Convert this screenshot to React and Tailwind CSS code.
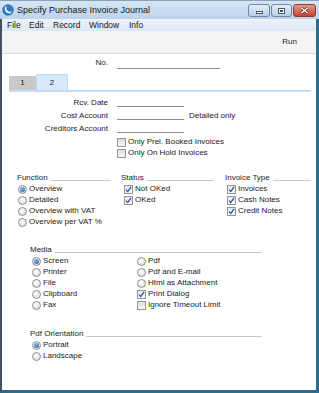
import React from "react";

function Radio({ on }) {
  return (
    <div className="w-[9px] h-[9px] rounded-full border border-[#8b8d90] bg-[radial-gradient(circle_at_40%_35%,#ffffff,#d4d6d8)] flex items-center justify-center shrink-0">
      {on && (
        <div className="w-[5px] h-[5px] rounded-full bg-[radial-gradient(circle_at_40%_35%,#7fb6ea,#1f5fae)]" />
      )}
    </div>
  );
}

function Check({ on }) {
  return (
    <div
      className={
        "w-[9px] h-[9px] border border-[#939494] shrink-0 flex items-center justify-center " +
        (on
          ? "bg-[linear-gradient(to_bottom,#e4eaf2,#f6f8fb)]"
          : "bg-[linear-gradient(to_bottom,#dcdcdc,#f7f7f7)]")
      }
    >
      {on && (
        <svg width="7" height="7" viewBox="0 0 7 7">
          <path d="M1 3.6 L2.8 5.6 L6 0.8" fill="none" stroke="#2a4a96" strokeWidth="1.2" />
        </svg>
      )}
    </div>
  );
}

function Item({ kind, on, label }) {
  return (
    <div className="h-[11px] flex items-center gap-[2px]">
      {kind === "r" ? <Radio on={on} /> : <Check on={on} />}
      <span className="whitespace-nowrap leading-none">{label}</span>
    </div>
  );
}

function Header({ label }) {
  return (
    <div className="h-[11px] flex items-center">
      <span className="whitespace-nowrap leading-none">{label}</span>
      <div className="flex-1 ml-[3px] mt-[4px] h-px bg-[#c9c9c9]" />
    </div>
  );
}

function FieldRow({ label, h, extra }) {
  return (
    <div className={"flex items-center " + h}>
      <div className="w-[106px] text-right whitespace-nowrap leading-none">{label}</div>
      <div className="ml-[9px] w-[67px] h-[8px] border-b border-[#8c8c8c]" />
      {extra && <span className="ml-[5px] whitespace-nowrap leading-none">{extra}</span>}
    </div>
  );
}

export default function App() {
  return (
    <div className="w-[319px] h-[393px] overflow-hidden flex flex-col bg-[#bdd4ec] font-['Liberation_Sans',Arial,sans-serif] text-[8px] text-[#1a1a1a]">
      {/* Title bar */}
      <div className="h-[19px] shrink-0 flex items-center pl-[2px] bg-[linear-gradient(to_bottom,#d5e5f5,#bcd3ea)] border-t border-[#8aa3bd]">
        <svg width="12" height="12" viewBox="0 0 12 12" className="shrink-0">
          <circle cx="6" cy="6" r="5.8" fill="#2f7cc4" />
          <path d="M3.2 2.6 C2.2 5 3.2 8.6 6.4 9.2 C8.4 9.5 9.6 8.4 9.9 7.2 C8.6 8.2 6.4 8 5.2 6.6 C4.2 5.4 4 3.8 4.6 2.2 Z" fill="#ffffff" />
        </svg>
        <span className="ml-[3px] text-[9px] leading-none text-[#151515]">Specify Purchase Invoice Journal</span>
        <div className="ml-auto mr-[3px] flex gap-[1px] self-start mt-[3px]">
          <div className="w-[22px] h-[13px] rounded-[3px] border border-[#6d87a3] bg-[linear-gradient(to_bottom,#e3edf7,#b7cde4)] flex items-center justify-center">
            <div className="w-[7px] h-[3px] bg-white border border-[#4a5563] mt-[4px]" />
          </div>
          <div className="w-[21px] h-[13px] rounded-[3px] border border-[#6d87a3] bg-[linear-gradient(to_bottom,#e3edf7,#b7cde4)] flex items-center justify-center">
            <div className="w-[7px] h-[6px] bg-white border border-[#4a5563] flex items-center justify-center">
              <div className="w-[3px] h-[2px] border border-[#4a5563]" />
            </div>
          </div>
          <div className="w-[23px] h-[13px] rounded-[3px] border border-[#8b3a30] bg-[linear-gradient(to_bottom,#e79a8c,#c8412f)] flex items-center justify-center">
            <svg width="9" height="7" viewBox="0 0 9 7">
              <path d="M1.5 1 L7.5 6 M7.5 1 L1.5 6" stroke="#4a1a12" strokeWidth="2.6" />
              <path d="M1.5 1 L7.5 6 M7.5 1 L1.5 6" stroke="#ffffff" strokeWidth="1.5" />
            </svg>
          </div>
        </div>
      </div>

      {/* Client */}
      <div className="flex-1 flex flex-col bg-white border-l-2 border-l-[#46505b] border-r-[3px] border-r-[#2b6e8c] border-b-[3px] border-b-[#2b6e8c]">
        {/* Menu */}
        <div className="h-[12px] shrink-0 flex items-center bg-[linear-gradient(to_bottom,#eef3fa,#dbe6f3)] text-[8.5px] leading-none text-[#151515]">
          <span className="ml-[5px] w-[22px]">File</span>
          <span className="w-[24px]">Edit</span>
          <span className="w-[36px]">Record</span>
          <span className="w-[40px]">Window</span>
          <span>Info</span>
        </div>
        {/* Toolbar */}
        <div className="h-[23px] shrink-0 flex items-center justify-end pr-[19px] bg-[#f4f4f4] border-b border-[#dadada]">
          <span className="leading-none">Run</span>
        </div>

        {/* Content */}
        <div className="flex-1 flex flex-col">
          <div className="mt-[2px] h-[14px] flex items-center">
            <div className="w-[106px] text-right leading-none">No.</div>
            <div className="ml-[9px] w-[103px] h-[12px] border-b border-[#8c8c8c]" />
          </div>

          {/* Tabs */}
          <div className="mt-[4px] ml-[7px] mr-[5px] flex flex-col">
            <div className="h-[16px] flex items-end">
              <div className="w-[27px] h-[14px] bg-[#c9c9c9] flex items-center justify-center leading-none">1</div>
              <div className="w-[32px] h-[16px] bg-[#d6e8f9] border-t border-x border-[#bcd7f0] flex items-center justify-center leading-none">2</div>
            </div>
            <div className="h-[1.5px] bg-[#c4ddf4]" />
          </div>

          <div className="mt-[4px]">
            <FieldRow label="Rcv. Date" h="h-[14px]" />
            <FieldRow label="Cost Account" h="h-[13px]" extra="Detailed only" />
            <FieldRow label="Creditors Account" h="h-[13px]" />
          </div>

          <div className="ml-[115px] mt-[1px]">
            <Item kind="c" label="Only Prel. Booked Invoices" />
            <Item kind="c" label="Only On Hold Invoices" />
          </div>

          {/* Function / Status / Invoice Type */}
          <div className="mt-[14px] flex">
            <div className="ml-[15px] w-[94px]">
              <Header label="Function" />
              <div className="ml-[1px]">
                <Item kind="r" on label="Overview" />
                <Item kind="r" label="Detailed" />
                <Item kind="r" label="Overview with VAT" />
                <Item kind="r" label="Overview per VAT %" />
              </div>
            </div>
            <div className="ml-[10px] w-[93px]">
              <Header label="Status" />
              <div className="ml-[3px]">
                <Item kind="c" on label="Not OKed" />
                <Item kind="c" on label="OKed" />
              </div>
            </div>
            <div className="ml-[11px] w-[86px]">
              <Header label="Invoice Type" />
              <div className="ml-[2px]">
                <Item kind="c" on label="Invoices" />
                <Item kind="c" on label="Cash Notes" />
                <Item kind="c" on label="Credit Notes" />
              </div>
            </div>
          </div>

          {/* Media */}
          <div className="mt-[17px] ml-[28px] w-[232px]">
            <Header label="Media" />
            <div className="flex ml-[2px]">
              <div className="w-[105px]">
                <Item kind="r" on label="Screen" />
                <Item kind="r" label="Printer" />
                <Item kind="r" label="File" />
                <Item kind="r" label="Clipboard" />
                <Item kind="r" label="Fax" />
              </div>
              <div>
                <Item kind="r" label="Pdf" />
                <Item kind="r" label="Pdf and E-mail" />
                <Item kind="r" label="Html as Attachment" />
                <Item kind="c" on label="Print Dialog" />
                <Item kind="c" label="Ignore Timeout Limit" />
              </div>
            </div>
          </div>

          {/* Pdf Orientation */}
          <div className="mt-[18px] ml-[28px] w-[232px]">
            <Header label="Pdf Orientation" />
            <div className="ml-[2px]">
              <Item kind="r" on label="Portrait" />
              <Item kind="r" label="Landscape" />
            </div>
          </div>
        </div>
      </div>
    </div>
  );
}
